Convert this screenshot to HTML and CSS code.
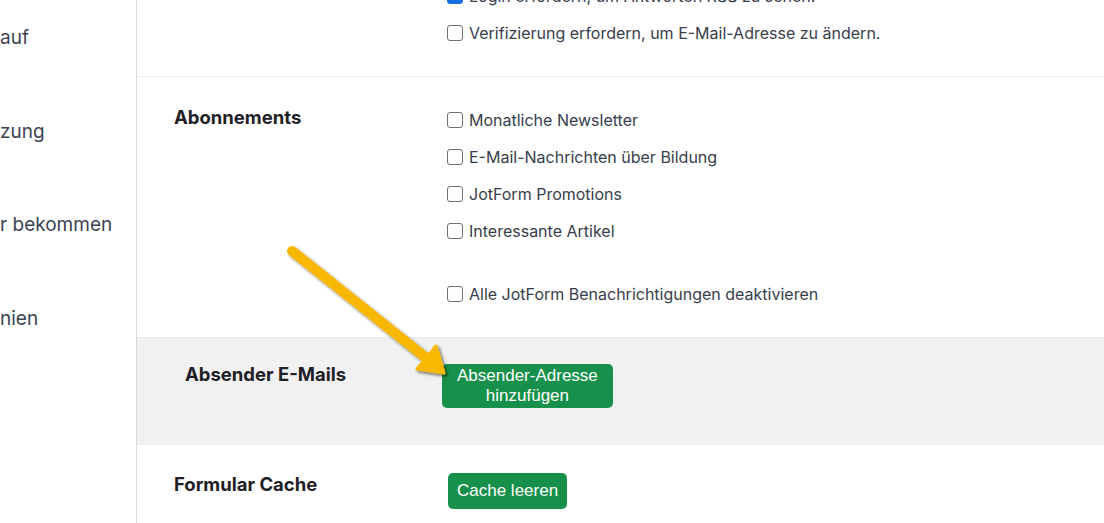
FILE: index.html
```html
<!DOCTYPE html>
<html lang="de">
<head>
    <meta charset="UTF-8">
    <meta name="viewport" content="width=device-width, initial-scale=1.0">
    <title>Kontoeinstellungen</title>
    <link rel="stylesheet" href="styles.css">
</head>
<body>
    <nav class="sidebar">
        <ul class="side-menu">
            <li>auf</li>
            <li>zung</li>
            <li>r bekommen</li>
            <li>nien</li>
        </ul>
    </nav>

    <main class="settings">
        <!-- Sicherheit -->
        <section class="setting setting--first">
            <div class="setting-label"></div>
            <div class="options">
                <label class="option"><input type="checkbox" checked> Login erfordern, um Antworten RSS zu sehen.</label>
                <label class="option"><input type="checkbox"> Verifizierung erfordern, um E-Mail-Adresse zu ändern.</label>
            </div>
        </section>

        <!-- Abonnements -->
        <section class="setting">
            <h2 class="setting-label">Abonnements</h2>
            <div class="options">
                <label class="option"><input type="checkbox"> Monatliche Newsletter</label>
                <label class="option"><input type="checkbox"> E-Mail-Nachrichten über Bildung</label>
                <label class="option"><input type="checkbox"> JotForm Promotions</label>
                <label class="option"><input type="checkbox"> Interessante Artikel</label>
                <label class="option option--spaced"><input type="checkbox"> Alle JotForm Benachrichtigungen deaktivieren</label>
            </div>
        </section>

        <!-- Absender -->
        <section class="setting setting--grey">
            <h2 class="setting-label">Absender E-Mails</h2>
            <div class="options">
                <button type="button" class="btn btn--wide">Absender-Adresse<br>hinzufügen</button>
            </div>
        </section>

        <!-- Cache -->
        <section class="setting setting--cache">
            <h2 class="setting-label">Formular Cache</h2>
            <div class="options">
                <button type="button" class="btn">Cache leeren</button>
            </div>
        </section>
    </main>

    <!-- Hinweis-Pfeil -->
    <svg class="arrow" width="1104" height="523" viewBox="0 0 1104 523">
        <defs>
            <filter id="shadow" x="-20%" y="-20%" width="140%" height="140%">
                <feDropShadow dx="2" dy="2" stdDeviation="1.6" flood-color="#000" flood-opacity="0.55"/>
            </filter>
        </defs>
        <g filter="url(#shadow)" fill="#f9b800" stroke="#f9b800">
            <line x1="292" y1="251" x2="430" y2="361" stroke-width="10" stroke-linecap="round"/>
            <polygon points="444,373 417,369 436,346" stroke-width="3" stroke-linejoin="round"/>
        </g>
    </svg>
</body>
</html>
```

FILE: styles.css
```css
body {
    margin: 0;
    height: 523px;
    overflow: hidden;
    display: flex;
    background: #fff;
    font-family: Inter, "Noto Sans", sans-serif;
    color: #383d4a;
}
.sidebar {
    width: 136px;
    flex-shrink: 0;
    border-right: 1px solid #dadada;
    overflow: hidden;
}
.side-menu {
    list-style: none;
    margin: 0;
    padding: 25px 0 0 0;
}
.side-menu li {
    height: 93.5px;
    font-size: 19px;
    line-height: 26px;
    white-space: nowrap;
    color: #3c4253;
}
.settings {
    flex: 1;
    min-width: 0;
}
.setting {
    display: grid;
    grid-template-columns: 273px 1fr;
    padding: 24px 0 25px 37px;
    border-bottom: 1px solid #ededed;
}
.setting--first {
    margin-top: -23px;
    padding: 0 0 25px 37px;
}
.setting-label {
    margin: 0;
    font-size: 18.5px;
    font-weight: 700;
    line-height: 33px;
    color: #1f2026;
}
.options {
    display: flex;
    flex-direction: column;
    align-items: flex-start;
}
.option {
    display: flex;
    align-items: center;
    gap: 6px;
    height: 37px;
    font-size: 16px;
    white-space: nowrap;
}
.option--spaced {
    margin-top: 26px;
}
.option input {
    appearance: none;
    margin: 0;
    width: 16px;
    height: 16px;
    border: 1px solid #6f6f6f;
    border-radius: 3px;
    background: #fff;
}
.option input:checked {
    background: #1a6fe0;
    border-color: #1a6fe0;
}
.setting--grey {
    background: #f1f1f1;
    padding: 26px 0 37px 48px;
    grid-template-columns: 257px 1fr;
    border-bottom: none;
}
.setting--grey .setting-label {
    line-height: 20px;
}
.setting--cache {
    padding: 28px 0 20px 37px;
    grid-template-columns: 274px 1fr;
    border-bottom: none;
}
.setting--cache .setting-label {
    line-height: 22px;
}
.btn {
    font-family: "Liberation Sans", Arial, sans-serif;
    font-size: 17px;
    line-height: 20px;
    color: #fff;
    background: #16904a;
    border: none;
    border-radius: 5px;
    padding: 8px 9px;
    cursor: pointer;
}
.btn--wide {
    padding: 2px 15px;
}
.arrow {
    position: absolute;
    top: 0;
    left: 0;
    pointer-events: none;
}
```
